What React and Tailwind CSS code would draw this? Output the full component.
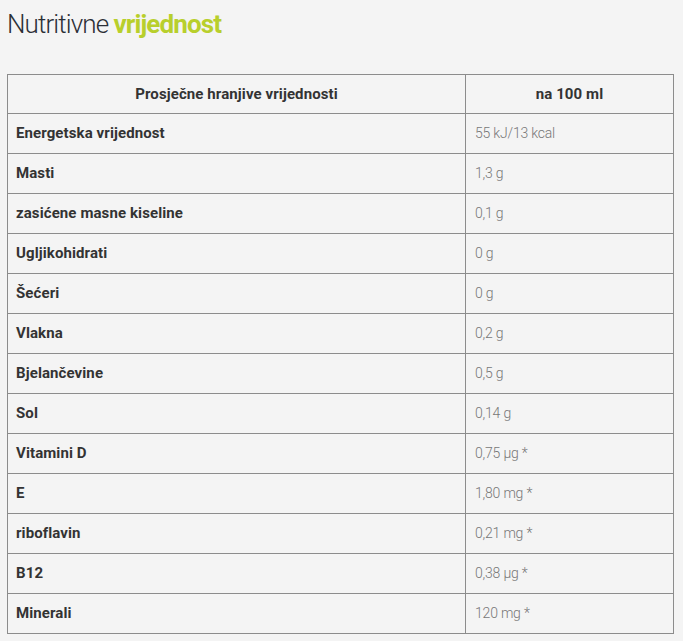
import React from 'react';

const rows = [
    ['Energetska vrijednost', '55 kJ/13 kcal'],
    ['Masti', '1,3 g'],
    ['zasićene masne kiseline', '0,1 g'],
    ['Ugljikohidrati', '0 g'],
    ['Šećeri', '0 g'],
    ['Vlakna', '0,2 g'],
    ['Bjelančevine', '0,5 g'],
    ['Sol', '0,14 g'],
    ['Vitamini D', '0,75 µg *'],
    ['E', '1,80 mg *'],
    ['riboflavin', '0,21 mg *'],
    ['B12', '0,38 µg *'],
    ['Minerali', '120 mg *'],
];

const App = () => {
    return (
        <div className="min-h-[641px] bg-[#f4f4f4] px-[7px] pt-[7px] font-['Roboto',sans-serif]">
            <h2 className="text-[26px] leading-[34px] tracking-[-0.9px] text-[#2b2f36] font-light">
                Nutritivne <span className="font-bold text-[#b8cf2c]">vrijednost</span>
            </h2>

            <table className="mt-[33px] w-[667px] border-collapse">
                <thead>
                    <tr className="h-[39px]">
                        <th className="w-[458px] border border-[#8c8c8c] text-[15px] tracking-[0.1px] font-bold text-[#333]">Prosječne hranjive vrijednosti</th>
                        <th className="border border-[#8c8c8c] text-[15px] tracking-[0.1px] font-bold text-[#333]">na 100 ml</th>
                    </tr>
                </thead>
                <tbody>
                    {rows.map(([name, value]) => (
                        <tr key={name} className="h-[40px]">
                            <td className="border border-[#8c8c8c] pl-[8px] text-[15px] tracking-[0.1px] font-bold text-[#333]">{name}</td>
                            <td className="border border-[#8c8c8c] pl-[9px] text-[14px] tracking-[-0.2px] font-light text-[#777]">{value}</td>
                        </tr>
                    ))}
                </tbody>
            </table>
        </div>
    );
};

export default App;
